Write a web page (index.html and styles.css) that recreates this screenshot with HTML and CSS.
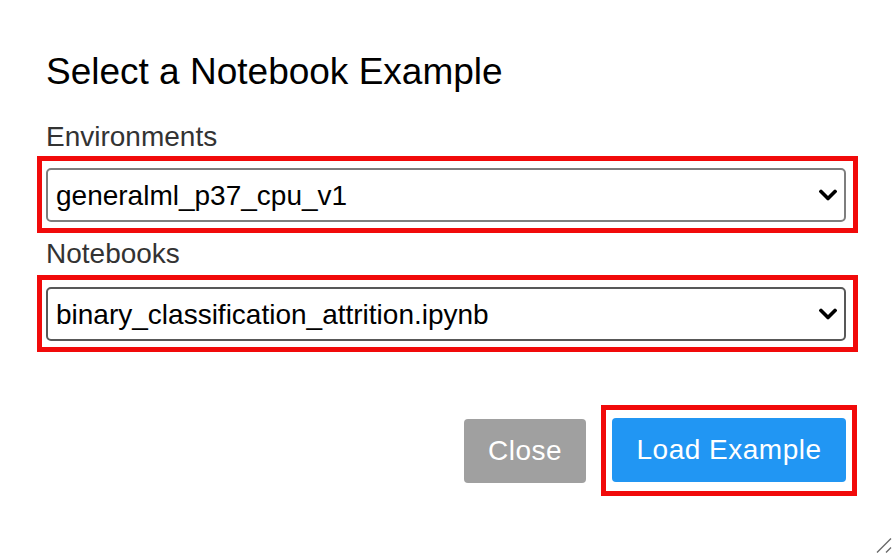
FILE: index.html
```html
<!DOCTYPE html>
<html>
<head>
<meta charset="utf-8">
<title>Select a Notebook Example</title>
<link rel="stylesheet" href="styles.css">
</head>
<body>
<div class="dialog">
  <h2 class="title">Select a Notebook Example</h2>
  <div class="label label-env">Environments</div>
  <div class="mark mark-field">
    <div class="select-wrap">
      <select class="select select-light">
        <option>generalml_p37_cpu_v1</option>
      </select>
      <svg class="chev" width="18" height="11" viewBox="0 0 18 11"><path d="M2 2 L9 9 L16 2" fill="none" stroke="#000" stroke-width="3.6" stroke-linecap="square" stroke-linejoin="miter"/></svg>
    </div>
  </div>
  <div class="label label-nb">Notebooks</div>
  <div class="mark mark-field">
    <div class="select-wrap">
      <select class="select select-dark">
        <option>binary_classification_attrition.ipynb</option>
      </select>
      <svg class="chev" width="18" height="11" viewBox="0 0 18 11"><path d="M2 2 L9 9 L16 2" fill="none" stroke="#000" stroke-width="3.6" stroke-linecap="square" stroke-linejoin="miter"/></svg>
    </div>
  </div>
  <div class="actions">
    <button class="btn btn-close">Close</button>
    <div class="mark mark-btn">
      <button class="btn btn-load">Load Example</button>
    </div>
  </div>
</div>
<svg class="resize" width="16" height="17" viewBox="0 0 16 17"><path d="M1 15.5 L15 1.5 M10 15.5 L15 10.5" stroke="#6a6a6a" stroke-width="1.4" fill="none"/></svg>
</body>
</html>
```
FILE: styles.css
```css
html, body {
  margin: 0;
  padding: 0;
  background: #ffffff;
}
body {
  font-family: "Liberation Sans", Arial, Helvetica, sans-serif;
  width: 892px;
  height: 554px;
  position: relative;
  overflow: hidden;
}
.dialog {
  padding: 50px 0 0 46px;
  width: 800px;
}
.title {
  margin: 0 0 26px;
  font-size: 37px;
  line-height: 44px;
  font-weight: normal;
  color: #000;
}
.label {
  font-size: 28px;
  line-height: 34px;
  color: #333;
}
.label-env { margin-bottom: 2px; }
.label-nb { margin-top: 4px; margin-bottom: 4px; }
.mark {
  border: 5px solid #f10a0a;
}
.mark-field {
  margin-left: -9px;
  padding: 7px 7px 6px 4px;
  width: 800px;
}
.select-wrap {
  position: relative;
  width: 800px;
  height: 54px;
}
.select {
  -webkit-appearance: none;
  appearance: none;
  box-sizing: border-box;
  width: 800px;
  height: 54px;
  margin: 0;
  padding: 0 40px 0 8px;
  border: 2px solid #7e7e7e;
  border-radius: 5px;
  background: #fff;
  color: #000;
  font-family: "Liberation Sans", Arial, sans-serif;
  font-size: 28px;
  outline: none;
}
.select-dark {
  border-color: #585858;
}
.chev {
  position: absolute;
  right: 9px;
  top: 50%;
  transform: translateY(-50%);
  pointer-events: none;
}
.actions {
  display: flex;
  justify-content: flex-end;
  align-items: center;
  gap: 15px;
  margin-top: 53px;
  margin-right: -11px;
}
.btn {
  box-sizing: border-box;
  height: 64px;
  border: none;
  border-radius: 4px;
  color: #fff;
  font-family: "Liberation Sans", Arial, sans-serif;
  font-size: 28px;
  letter-spacing: 0.5px;
  padding: 0;
  cursor: pointer;
}
.btn-close {
  width: 122px;
  background: #a0a0a0;
}
.mark-btn {
  padding: 8px 6px 9px 6px;
  display: flex;
}
.btn-load {
  width: 234px;
  background: #2196f3;
}
.resize {
  position: absolute;
  right: 0;
  bottom: 0;
}
```
